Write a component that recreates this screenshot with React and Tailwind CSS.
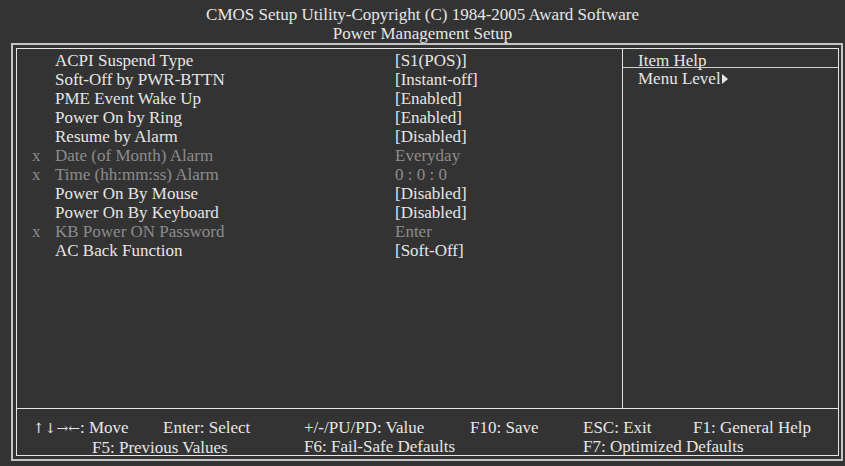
import React from 'react'

const items = [
  { label: 'ACPI Suspend Type', value: '[S1(POS)]' },
  { label: 'Soft-Off by PWR-BTTN', value: '[Instant-off]' },
  { label: 'PME Event Wake Up', value: '[Enabled]' },
  { label: 'Power On by Ring', value: '[Enabled]' },
  { label: 'Resume by Alarm', value: '[Disabled]' },
  { label: 'Date (of Month) Alarm', value: 'Everyday', off: true },
  { label: 'Time (hh:mm:ss) Alarm', value: '0 : 0 : 0', off: true },
  { label: 'Power On By Mouse', value: '[Disabled]' },
  { label: 'Power On By Keyboard', value: '[Disabled]' },
  { label: 'KB Power ON Password', value: 'Enter', off: true },
  { label: 'AC Back Function', value: '[Soft-Off]' },
]

export default function App(){
  return (
    <div className="w-[845px] h-[466px] bg-[#333333] text-[#e6e6e6] text-[17px] leading-[19px] overflow-hidden" style={{ fontFamily: '"Liberation Serif", "DejaVu Serif", serif' }}>
      {/* Title */}
      <div className="h-[43px] pt-[5px] text-center">
        <div>CMOS Setup Utility-Copyright (C) 1984-2005 Award Software</div>
        <div>Power Management Setup</div>
      </div>

      {/* Double frame */}
      <div className="ml-[11px] w-[832px] border-2 border-[#c4c4c4] pl-[3px] pr-[2px] pt-[3px] pb-[3px]">
        <div className="border border-[#e6e6e6]">
          <div className="flex h-[359px]">
            {/* Items */}
            <div className="w-[605px] pt-[2px]">
              {items.map(it => (
                <div key={it.label} className={"flex " + (it.off ? 'text-[#8c8c8c]' : '')}>
                  <span className="w-[38px] pl-[15px]">{it.off ? 'x' : ''}</span>
                  <span className="w-[340px]">{it.label}</span>
                  <span>{it.value}</span>
                </div>
              ))}
            </div>
            {/* Help */}
            <div className="flex-1 border-l border-[#e6e6e6]">
              <div className="pl-[15px] pt-[2px] h-[16px] box-content border-b border-[#cfcfcf]">
                <div className="h-[16px] leading-[19px]">Item Help</div>
              </div>
              <div className="pl-[15px] pt-[1px] flex items-center">
                Menu Level
                <svg width="6" height="10" viewBox="0 0 6 10" className="ml-[1px]"><path d="M0 0 L6 5 L0 10 Z" fill="#e6e6e6" /></svg>
              </div>
            </div>
          </div>

          {/* Footer */}
          <div className="border-t border-[#e6e6e6] h-[47px] pt-[9px] flex">
            <div className="w-[287px]">
              <div className="flex pl-[16px]">
                <span className="w-[130px]" style={{ fontFamily: '"DejaVu Serif", serif' }}><span className="text-[14px]">↑↓→←</span><span style={{ fontFamily: '"Liberation Serif", serif' }}>: Move</span></span>
                <span>Enter: Select</span>
              </div>
              <div className="pl-[75px]">F5: Previous Values</div>
            </div>
            <div className="w-[279px]">
              <div className="flex">
                <span className="w-[166px]">+/-/PU/PD: Value</span>
                <span>F10: Save</span>
              </div>
              <div>F6: Fail-Safe Defaults</div>
            </div>
            <div className="flex-1">
              <div className="flex">
                <span className="w-[110px]">ESC: Exit</span>
                <span>F1: General Help</span>
              </div>
              <div>F7: Optimized Defaults</div>
            </div>
          </div>
        </div>
      </div>
    </div>
  )
}
